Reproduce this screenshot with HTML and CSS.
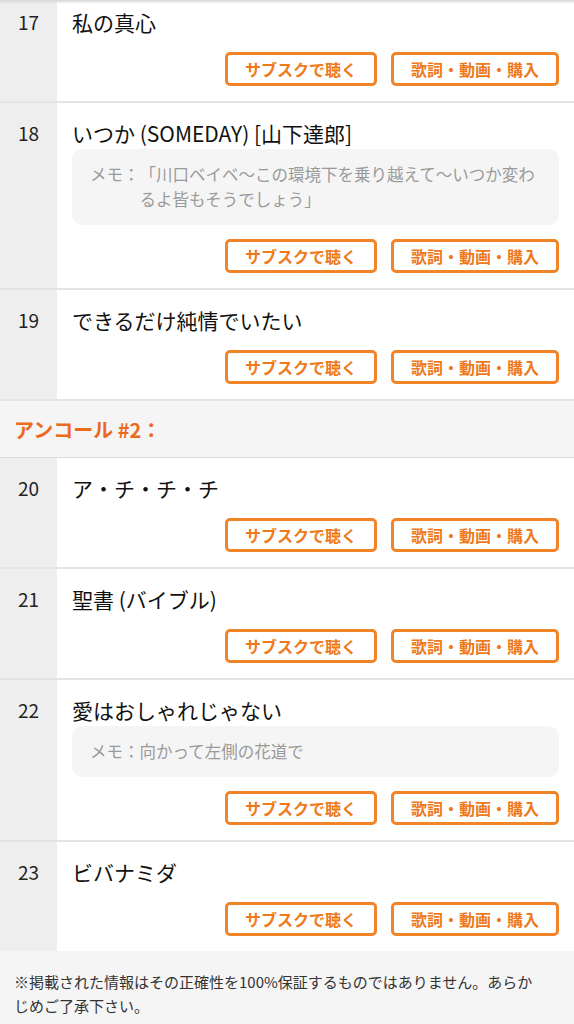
FILE: index.html
```html
<!DOCTYPE html>
<html lang="ja">
<head>
    <meta charset="utf-8">
    <meta name="viewport" content="width=device-width">
    <title>セットリスト</title>
    <link rel="stylesheet" href="styles.css">
</head>
<body>
    <div class="top-shade"></div>
    <div class="setlist">
        <div class="song">
            <div class="song__num">17</div>
            <div class="song__body">
                <div class="song__title">私の真心</div>
                <div class="song__links">
                    <a class="btn">サブスクで聴く</a>
                    <a class="btn">歌詞・動画・購入</a>
                </div>
            </div>
        </div>
        <div class="song">
            <div class="song__num">18</div>
            <div class="song__body">
                <div class="song__title">いつか (SOMEDAY) [山下達郎]</div>
                <div class="memo">メモ：「川口ベイベ〜この環境下を乗り越えて〜いつか変わるよ皆もそうでしょう」</div>
                <div class="song__links">
                    <a class="btn">サブスクで聴く</a>
                    <a class="btn">歌詞・動画・購入</a>
                </div>
            </div>
        </div>
        <div class="song">
            <div class="song__num">19</div>
            <div class="song__body">
                <div class="song__title">できるだけ純情でいたい</div>
                <div class="song__links">
                    <a class="btn">サブスクで聴く</a>
                    <a class="btn">歌詞・動画・購入</a>
                </div>
            </div>
        </div>

        <div class="section-head">アンコール #2：</div>

        <div class="song">
            <div class="song__num">20</div>
            <div class="song__body">
                <div class="song__title">ア・チ・チ・チ</div>
                <div class="song__links">
                    <a class="btn">サブスクで聴く</a>
                    <a class="btn">歌詞・動画・購入</a>
                </div>
            </div>
        </div>
        <div class="song">
            <div class="song__num">21</div>
            <div class="song__body">
                <div class="song__title">聖書 (バイブル)</div>
                <div class="song__links">
                    <a class="btn">サブスクで聴く</a>
                    <a class="btn">歌詞・動画・購入</a>
                </div>
            </div>
        </div>
        <div class="song">
            <div class="song__num">22</div>
            <div class="song__body">
                <div class="song__title">愛はおしゃれじゃない</div>
                <div class="memo">メモ：向かって左側の花道で</div>
                <div class="song__links">
                    <a class="btn">サブスクで聴く</a>
                    <a class="btn">歌詞・動画・購入</a>
                </div>
            </div>
        </div>
        <div class="song song--last">
            <div class="song__num">23</div>
            <div class="song__body">
                <div class="song__title">ビバナミダ</div>
                <div class="song__links">
                    <a class="btn">サブスクで聴く</a>
                    <a class="btn">歌詞・動画・購入</a>
                </div>
            </div>
        </div>
    </div>
    <p class="note">※掲載された情報はその正確性を100%保証するものではありません。あらかじめご了承下さい。</p>
</body>
</html>
```

FILE: styles.css
```css
* {
    box-sizing: border-box;
}

html, body {
    margin: 0;
    padding: 0;
}

body {
    font-family: "Noto Sans CJK JP", "Noto Sans", sans-serif;
    color: #111;
    background: #f5f5f5;
    text-spacing-trim: space-all;
}

.top-shade {
    position: fixed;
    top: 0;
    left: 0;
    right: 0;
    height: 4px;
    background: linear-gradient(#d6d6d6, rgba(230, 230, 230, 0));
    z-index: 2;
}

.setlist {
    margin-top: -8px;
}

.song {
    display: flex;
    background: #fff;
    border-bottom: 2px solid #e4e4e4;
}

.song--last {
    border-bottom: 0;
}

.song__num {
    width: 57px;
    flex: none;
    background: #eeeeee;
    text-align: center;
    padding-top: 16px;
    font-size: 19px;
    line-height: 28px;
    color: #222;
}

.song__body {
    flex: 1;
    padding: 14px 15px 15px 15px;
}

.song__title {
    font-size: 21px;
    line-height: 32px;
    font-weight: 400;
    color: #111;
}

.memo {
    margin-bottom: 1px;
    padding: 13px 14px 13px 67.5px;
    text-indent: -49.5px;
    background: #f5f5f5;
    border-radius: 10px;
    font-size: 16.5px;
    line-height: 25px;
    color: #9a9a9a;
}

.song__links {
    display: flex;
    justify-content: flex-end;
    gap: 14px;
    margin-top: 14px;
}

.btn {
    display: flex;
    align-items: center;
    height: 34px;
    padding: 0 17px;
    border: 3px solid #f08427;
    border-radius: 5px;
    font-size: 16px;
    font-weight: 700;
    color: #ee7a1c;
    cursor: pointer;
}

.section-head {
    height: 57px;
    padding: 0 14px;
    display: flex;
    align-items: center;
    background: #f5f5f5;
    border-bottom: 1px solid #dcdcdc;
    font-size: 20px;
    font-weight: 700;
    color: #ec6a1e;
}

.note {
    margin: 0;
    padding: 19px 32px 12px 14px;
    background: #f5f5f5;
    font-size: 15px;
    line-height: 24px;
    color: #333;
}
```
